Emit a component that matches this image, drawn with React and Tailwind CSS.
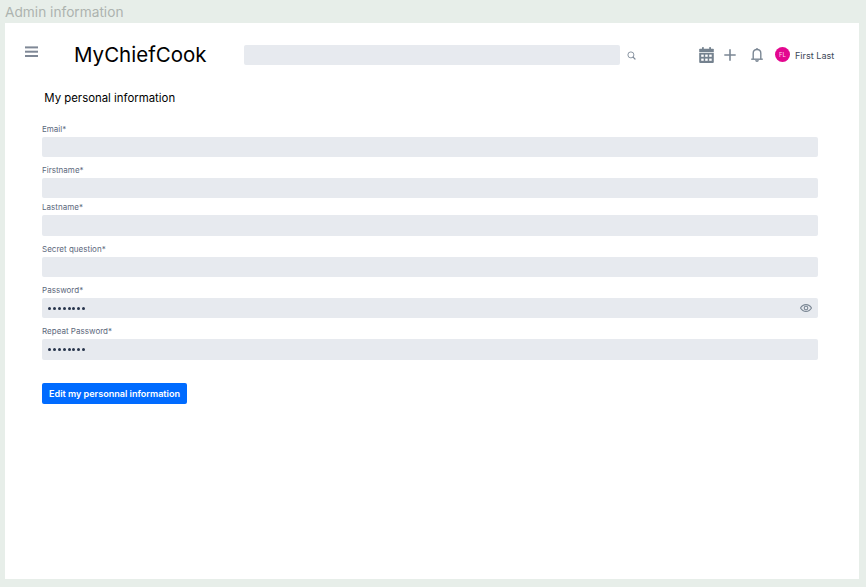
import React from "react";

const fields = [
  { label: "Email*", gap: "mb-[7px]" },
  { label: "Firstname*", gap: "mb-[3px]" },
  { label: "Lastname*", gap: "mb-[7px]" },
  { label: "Secret question*", gap: "mb-[7px]" },
  { label: "Password*", gap: "mb-[7px]", dots: true, eye: true },
  { label: "Repeat Password*", gap: "", dots: true },
];

function MenuIcon() {
  return (
    <svg className="mt-[22px] ml-[20px] h-[12px] w-[13px] shrink-0" viewBox="0 0 13 12" fill="#7f8896">
      <rect x="0" y="0.4" width="13" height="2" />
      <rect x="0" y="4.7" width="13" height="2" />
      <rect x="0" y="9" width="13" height="2" />
    </svg>
  );
}

function SearchIcon() {
  return (
    <svg className="mt-[27px] ml-[6.5px] h-[9px] w-[9px] shrink-0" viewBox="0 0 9 9" fill="none" stroke="#7e8a98">
      <circle cx="3.9" cy="3.9" r="3" strokeWidth="0.9" />
      <path d="M6.1 6.1L8 8" strokeWidth="1.2" strokeLinecap="round" />
    </svg>
  );
}

function CalendarIcon() {
  return (
    <svg className="mt-[23px] h-[16px] w-[15px] shrink-0" viewBox="0 0 15 16">
      <g fill="#75828f">
        <rect x="3" y="0" width="1.8" height="3" rx="0.4" />
        <rect x="10.2" y="0" width="1.8" height="3" rx="0.4" />
        <path d="M1 1.8H14Q14.8 1.8 14.8 2.6V5H0.2V2.6Q0.2 1.8 1 1.8Z" />
        <path d="M0.2 5.8H14.8V15Q14.8 16 13.8 16H1.2Q0.2 16 0.2 15Z" />
      </g>
      <g fill="#fff">
        <rect x="2.2" y="7.6" width="2.5" height="2.2" />
        <rect x="6.2" y="7.6" width="2.5" height="2.2" />
        <rect x="10.2" y="7.6" width="2.5" height="2.2" />
        <rect x="2.2" y="11.6" width="2.5" height="2.2" />
        <rect x="6.2" y="11.6" width="2.5" height="2.2" />
        <rect x="10.2" y="11.6" width="2.5" height="2.2" />
      </g>
    </svg>
  );
}

function PlusIcon() {
  return (
    <svg className="mt-[25px] ml-[10px] h-[12px] w-[12px] shrink-0" viewBox="0 0 12 12" stroke="#7b8794" strokeWidth="1.6">
      <path d="M6 0.3V11.7M0.3 6H11.7" />
    </svg>
  );
}

function BellIcon() {
  return (
    <svg className="mt-[24px] ml-[15px] h-[14px] w-[12px] shrink-0" viewBox="0 0 12 14" fill="none" stroke="#7b8794" strokeWidth="1.4">
      <path d="M2.2 11V5.3C2.2 3 3.8 1.5 6 1.5S9.8 3 9.8 5.3V11" />
      <path d="M0.2 11.2H11.8" />
      <path d="M6 0.1V1.5" strokeWidth="1.4" />
      <path d="M4.7 12.2Q4.9 13.2 6 13.2T7.3 12.2" />
    </svg>
  );
}

function EyeIcon() {
  return (
    <svg className="h-[8px] w-[12px]" viewBox="0 0 12 8" fill="none" stroke="#7b8794" strokeWidth="1.1">
      <path d="M0.5 4C1.8 1.7 3.6 0.6 6 0.6S10.2 1.7 11.5 4C10.2 6.3 8.4 7.4 6 7.4S1.8 6.3 0.5 4Z" />
      <circle cx="6" cy="4" r="1.8" />
    </svg>
  );
}

function Dots() {
  return (
    <div className="ml-[6px] flex gap-[1.9px] pt-px">
      {Array.from({ length: 8 }, (_, i) => (
        <span key={i} className="h-[3px] w-[3px] rounded-full bg-[#27344b]" />
      ))}
    </div>
  );
}

export default function App() {
  return (
    <div className="flex h-[587px] w-[866px] flex-col overflow-hidden bg-[#e7eee9] font-['Inter',sans-serif]">
      <div className="h-[23.4px] shrink-0 pt-[3px] pl-[5px] text-[13.7px] leading-[19px] whitespace-nowrap text-[#adb3af]">
        Admin information
      </div>
      <main className="ml-[5px] h-[555.2px] w-[854.4px] shrink-0 bg-white">
        <header className="flex h-[66.1px] items-start pt-[0.6px]">
          <MenuIcon />
          <h1 className="mt-[16px] ml-[36px] w-[170px] shrink-0 text-[20.5px] leading-[30px] whitespace-nowrap text-black">
            MyChiefCook
          </h1>
          <div className="mt-[20.6px] h-[20.5px] w-[376.4px] shrink-0 rounded-[2px] bg-[#e7eaef]" />
          <SearchIcon />
          <div className="ml-[63px] flex items-start">
            <CalendarIcon />
            <PlusIcon />
            <BellIcon />
            <div className="mt-[23.5px] ml-[12px] flex h-[15px] w-[15px] shrink-0 items-center justify-center rounded-full bg-[#e3078f] text-[6px] leading-none text-[#ffd5ef]">
              FL
            </div>
            <span className="mt-[25px] ml-[5.1px] text-[9.1px] leading-[14px] whitespace-nowrap text-[#3b4657]">First Last</span>
          </div>
        </header>
        <h2 className="ml-[39.3px] h-[33.4px] pt-[0.5px] text-[11.4px] leading-[17px] text-black">My personal information</h2>
        <section className="ml-[37px] w-[776px]">
          {fields.map((f) => (
            <div key={f.label} className={f.gap}>
              <div className="h-[13.8px] text-[8px] leading-[12px] tracking-[0.02px] whitespace-nowrap text-[#5c687c]">{f.label}</div>
              <div className="flex h-[20.5px] items-center justify-between rounded-[2px] bg-[#e7eaef]">
                {f.dots && <Dots />}
                {f.eye && (
                  <div className="mr-[6px]">
                    <EyeIcon />
                  </div>
                )}
              </div>
            </div>
          ))}
          <button className="mt-[23.4px] block h-[20.5px] w-[145px] rounded-[2px] bg-[#006bff] text-center text-[9.05px] leading-[21px] font-semibold whitespace-nowrap text-white">
            Edit my personnal information
          </button>
        </section>
      </main>
    </div>
  );
}
